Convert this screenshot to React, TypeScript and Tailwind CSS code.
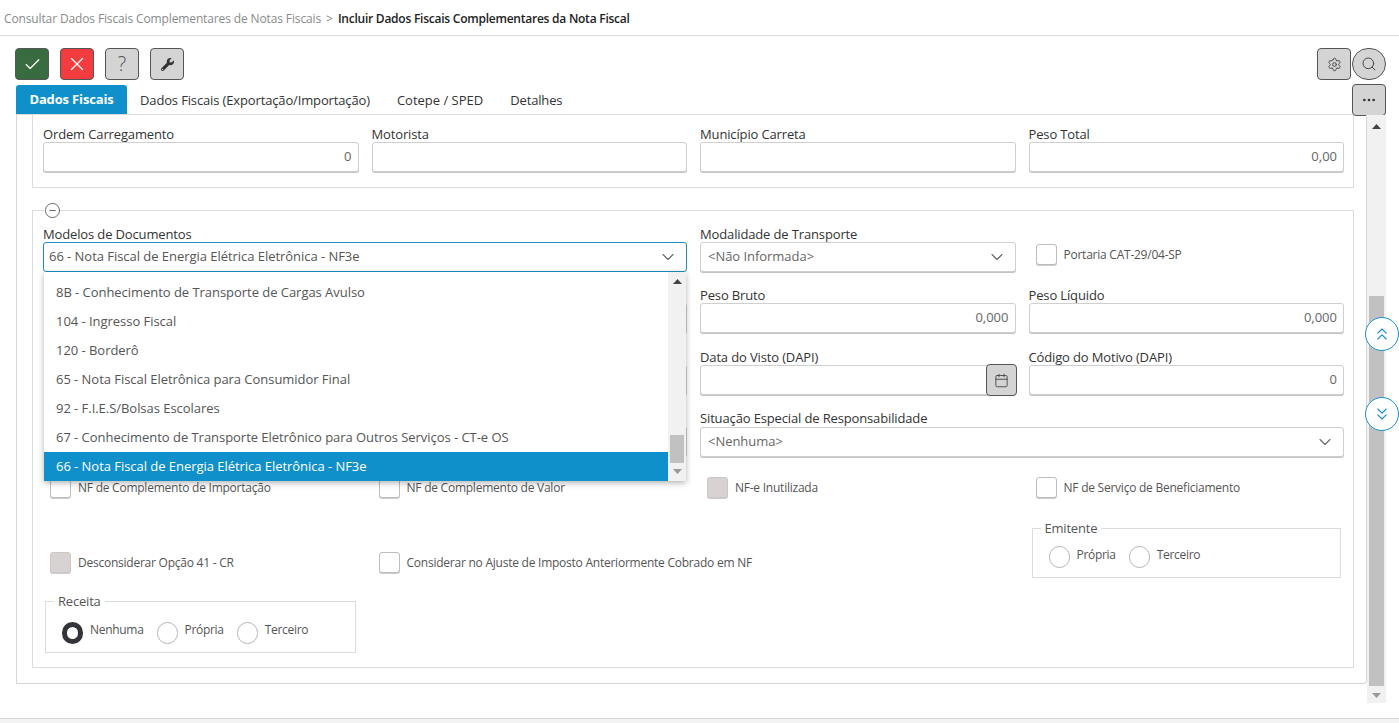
import { Check, X, Settings, Search, MoreHorizontal, ChevronDown, Calendar, ChevronsUp, ChevronsDown, CircleMinus } from "lucide-react";
import { FaWrench } from "react-icons/fa";
import type { ReactNode } from "react";

const options = [
  "8B - Conhecimento de Transporte de Cargas Avulso",
  "104 - Ingresso Fiscal",
  "120 - Borderô",
  "65 - Nota Fiscal Eletrônica para Consumidor Final",
  "92 - F.I.E.S/Bolsas Escolares",
  "67 - Conhecimento de Transporte Eletrônico para Outros Serviços - CT-e OS",
];

const inputBox = "h-[30px] w-full rounded-[3px] border border-[#cfcfcf] shadow-[0_1px_0_#c4c4c4] bg-white";
const labelText = "text-[13px] leading-[16px] tracking-[-0.14px] text-[#333]";

const ToolButton = ({ className, children }: { className: string; children: ReactNode }) => (
  <button className={`flex h-[32px] w-[34px] items-center justify-center rounded-[4px] border border-[#555] ${className}`}>
    {children}
  </button>
);

const Field = ({ label, value, className = "" }: { label?: string; value?: string; className?: string }) => (
  <div className={className}>
    <div className={`h-[16px] ${labelText}`}>{label}</div>
    <div className={`${inputBox} flex items-center justify-end px-[6px] text-[13px] text-[#666]`}>{value}</div>
  </div>
);

const SelectField = ({
  label,
  value,
  focused,
  labelHeight = "h-[16px]",
  className = "",
}: {
  label: string;
  value: string;
  focused?: boolean;
  labelHeight?: string;
  className?: string;
}) => (
  <div className={className}>
    <div className={`${labelHeight} ${labelText}`}>{label}</div>
    <div
      className={`flex h-[30px] w-full items-center justify-between rounded-[3px] border bg-white pr-[8px] text-[13px] tracking-[-0.04px] ${
        focused ? "border-[#1a8fc7] pl-[5px] text-[#555]" : "border-[#cfcfcf] pl-[7px] text-[#666] shadow-[0_1px_0_#c4c4c4]"
      }`}
    >
      <span>{value}</span>
      <ChevronDown size={20} strokeWidth={1.3} className="text-[#666]" />
    </div>
  </div>
);

const CheckItem = ({ label, disabled, className = "" }: { label: string; disabled?: boolean; className?: string }) => (
  <div className={`flex items-center gap-[7px] pl-[7px] ${className}`}>
    <span
      className={`h-[21px] w-[21px] shrink-0 rounded-[3px] border shadow-[0_1px_0_#ccc] ${
        disabled ? "border-[#cdc6c6] bg-[#d9d2d2]" : "border-[#bdbdbd] bg-white"
      }`}
    />
    <span className="text-[12px] leading-[16px] tracking-[-0.24px] text-[#555]">{label}</span>
  </div>
);

const Radio = ({ label, checked, labelClass = "" }: { label: string; checked?: boolean; labelClass?: string }) => (
  <div className="flex items-start gap-[7px]">
    <span className={`h-[22px] w-[21px] rounded-full bg-white ${checked ? "border-[5px] border-[#33343a]" : "border border-[#b5b5b5]"}`} />
    <span className={`text-[12px] leading-[16px] tracking-[-0.3px] text-[#555] ${labelClass}`}>{label}</span>
  </div>
);

const RadioGroup = ({ legend, className, children }: { legend: string; className: string; children: ReactNode }) => (
  <fieldset className={`border border-[#dcdcdc] ${className}`}>
    <legend className="ml-[8px] px-[4px] text-[13px] leading-[16px] tracking-[-0.2px] text-[#555]">{legend}</legend>
    {children}
  </fieldset>
);

const ScrollArrow = ({ up, className = "" }: { up?: boolean; className?: string }) => (
  <svg width="9" height="5" viewBox="0 0 9 5" className={className}>
    <path d={up ? "M4.5 0 9 5H0z" : "M0 0h9L4.5 5z"} fill="currentColor" />
  </svg>
);

export default function App() {
  return (
    <div className="relative flex h-[723px] w-[1399px] flex-col overflow-hidden bg-white font-['Open_Sans',sans-serif]">
      {/* breadcrumb */}
      <div className="flex h-[36px] shrink-0 items-center gap-[5px] border-b border-[#dcdcdc] pl-[4px] pt-[3px] text-[12px]">
        <span className="tracking-[-0.13px] text-[#8a8a8a]">Consultar Dados Fiscais Complementares de Notas Fiscais</span>
        <span className="text-[#888]">&gt;</span>
        <span className="font-semibold tracking-[-0.24px] text-[#222]">Incluir Dados Fiscais Complementares da Nota Fiscal</span>
      </div>

      {/* toolbar */}
      <div className="flex h-[48px] shrink-0 items-start justify-between pl-[15px] pr-[13px] pt-[12px]">
        <div className="flex gap-[11px]">
          <ToolButton className="bg-[#386b3f] text-white"><Check size={19} strokeWidth={1.5} /></ToolButton>
          <ToolButton className="bg-[#f33c40] text-white"><X size={22} strokeWidth={1.4} /></ToolButton>
          <ToolButton className="bg-[#d4d4d4] text-[20px] font-light text-[#555]">?</ToolButton>
          <ToolButton className="bg-[#d4d4d4] text-[#333]"><FaWrench size={13} /></ToolButton>
        </div>
        <div className="flex gap-[1px]">
          <ToolButton className="bg-[#d4d4d4] text-[#444]"><Settings size={15} strokeWidth={1.5} /></ToolButton>
          <button className="flex h-[32px] w-[34px] items-center justify-center rounded-full border border-[#555] bg-[#d4d4d4] text-[#444]">
            <Search size={16} strokeWidth={1.5} />
          </button>
        </div>
      </div>

      {/* tabs */}
      <div className="flex h-[31px] shrink-0 items-end justify-between pl-[16px] pr-[13px]">
        <div className="flex h-[30px] flex-1 items-stretch border-b border-[#dcdcdc] text-[13px] tracking-[-0.14px] text-[#333]">
          <div className="flex w-[111px] items-center justify-center rounded-t-[3px] bg-[#1090cb] pt-[1px] font-bold tracking-[-0.15px] text-white">Dados Fiscais</div>
          <div className="ml-[13px] flex items-center pt-[2px]">Dados Fiscais (Exportação/Importação)</div>
          <div className="ml-[27px] flex items-center pt-[2px] tracking-normal">Cotepe / SPED</div>
          <div className="ml-[27px] flex items-center pt-[2px]">Detalhes</div>
        </div>
        <button className="mb-[-1px] flex h-[32px] w-[34px] items-center justify-center rounded-[4px] border border-[#555] bg-[#d4d4d4] text-[#333]">
          <MoreHorizontal size={16} />
        </button>
      </div>

      {/* body */}
      <div className="flex min-h-0 flex-1 items-start pl-[16px]">
        <div className="h-[569px] w-[1351px] rounded-br-[4px] border-x border-b border-[#d6d6d6] pl-[15px] pr-[12px]">
          {/* upper card, scrolled past its top */}
          <div className="grid h-[73px] grid-cols-4 gap-x-[13px] border-x border-b border-[#dcdcdc] pl-[10px] pr-[9px] pt-[11px]">
            <Field label="Ordem Carregamento" value="0" />
            <Field label="Motorista" />
            <Field label="Município Carreta" />
            <Field label="Peso Total" value="0,00" />
          </div>

          <fieldset className="relative mt-[15px] h-[465px] border border-[#dcdcdc] pl-[10px] pr-[9px]">
            <legend className="ml-[1px] flex h-[15px] items-center">
              <CircleMinus size={17} strokeWidth={1.1} className="text-[#444]" />
            </legend>

            <div className="mt-[8px] grid grid-cols-4 gap-x-[13px]">
              <SelectField label="Modelos de Documentos" value="66 - Nota Fiscal de Energia Elétrica Eletrônica - NF3e" focused className="col-span-2" />
              <SelectField label="Modalidade de Transporte" value="<Não Informada>" />
              <div className="pt-[18px]"><CheckItem label="Portaria CAT-29/04-SP" /></div>
            </div>

            <div className="mt-[15px] grid grid-cols-4 gap-x-[13px]">
              <div />
              <Field />
              <Field label="Peso Bruto" value="0,000" />
              <Field label="Peso Líquido" value="0,000" />
            </div>

            <div className="mt-[16px] grid grid-cols-4 gap-x-[13px]">
              <div />
              <Field />
              <div>
                <div className={`h-[16px] ${labelText}`}>Data do Visto (DAPI)</div>
                <div className={`${inputBox} relative`}>
                  <button className="absolute right-[-2px] top-[-2px] flex h-[32px] w-[31px] items-center justify-center rounded-[4px] border border-[#555] bg-[#d4d4d4] text-[#444]">
                    <Calendar size={15} strokeWidth={1.4} />
                  </button>
                </div>
              </div>
              <Field label="Código do Motivo (DAPI)" value="0" />
            </div>

            <div className="mt-[15px] grid grid-cols-4 gap-x-[13px]">
              <div />
              <Field />
              <SelectField label="Situação Especial de Responsabilidade" value="<Nenhuma>" labelHeight="h-[17px]" className="col-span-2" />
            </div>

            <div className="mt-[20px] grid grid-cols-4 gap-x-[13px]">
              <CheckItem label="NF de Complemento de Importação" />
              <CheckItem label="NF de Complemento de Valor" />
              <CheckItem label="NF-e Inutilizada" disabled />
              <CheckItem label="NF de Serviço de Beneficiamento" />
            </div>

            <div className="mt-[22px] grid grid-cols-4 items-end gap-x-[13px]">
              <CheckItem label="Desconsiderar Opção 41 - CR" disabled className="mb-[5px]" />
              <CheckItem label="Considerar no Ajuste de Imposto Anteriormente Cobrado em NF" className="col-span-2 mb-[5px]" />
              <RadioGroup legend="Emitente" className="mx-[3px] h-[58px]">
                <div className="flex gap-[13px] pl-[16px] pt-[10px]">
                  <Radio label="Própria" labelClass="mt-[-1px] pt-[2px]" />
                  <Radio label="Terceiro" labelClass="mt-[-1px] pt-[2px]" />
                </div>
              </RadioGroup>
            </div>

            <RadioGroup legend="Receita" className="ml-[2px] mt-[15px] h-[60px] w-[311px]">
              <div className="flex gap-[13px] pl-[16px] pt-[13px]">
                <Radio label="Nenhuma" checked />
                <Radio label="Própria" />
                <Radio label="Terceiro" />
              </div>
            </RadioGroup>

            {/* open list of Modelos de Documentos */}
            <div className="absolute left-[11px] top-[54px] z-10 flex h-[209px] w-[642px] bg-white text-[13px] tracking-[-0.04px] text-[#555] shadow-[0_2px_6px_rgba(0,0,0,0.3)]">
              <ul className="flex w-[624px] flex-col pt-[6px]">
                {options.map((option) => (
                  <li key={option} className="flex h-[29px] items-center pl-[12px]">{option}</li>
                ))}
                <li className="flex h-[29px] items-center bg-[#1090cb] pl-[12px] text-white">66 - Nota Fiscal de Energia Elétrica Eletrônica - NF3e</li>
              </ul>
              <div className="flex w-[18px] flex-col items-center justify-between bg-[#f1f1f1] py-[7px] text-[#444]">
                <ScrollArrow up />
                <div className="mt-auto mb-[6px] h-[28px] w-[14px] bg-[#c1c1c1]" />
                <ScrollArrow className="text-[#999]" />
              </div>
            </div>
          </fieldset>
        </div>

        {/* page scrollbar */}
        <div className="flex h-[588px] w-[19px] flex-col items-center bg-[#f1f1f1] pb-[5px] pt-[9px] text-[#444]">
          <ScrollArrow up />
          <div className="mt-[167px] w-[15px] flex-1 bg-[#c1c1c1]" />
          <ScrollArrow className="mt-[7px] text-[#999]" />
        </div>
      </div>

      <button className="absolute left-[1365px] top-[317px] flex h-[34px] w-[34px] items-center justify-center rounded-full border border-[#1a8fc7] bg-white text-[#1a8fc7]">
        <ChevronsUp size={20} strokeWidth={1.4} />
      </button>
      <button className="absolute left-[1365px] top-[397px] flex h-[34px] w-[34px] items-center justify-center rounded-full border border-[#1a8fc7] bg-white text-[#1a8fc7]">
        <ChevronsDown size={20} strokeWidth={1.4} />
      </button>

      <div className="h-[5px] shrink-0 border-t border-[#d6d6d6] bg-[#f3f3f3]" />
    </div>
  );
}
